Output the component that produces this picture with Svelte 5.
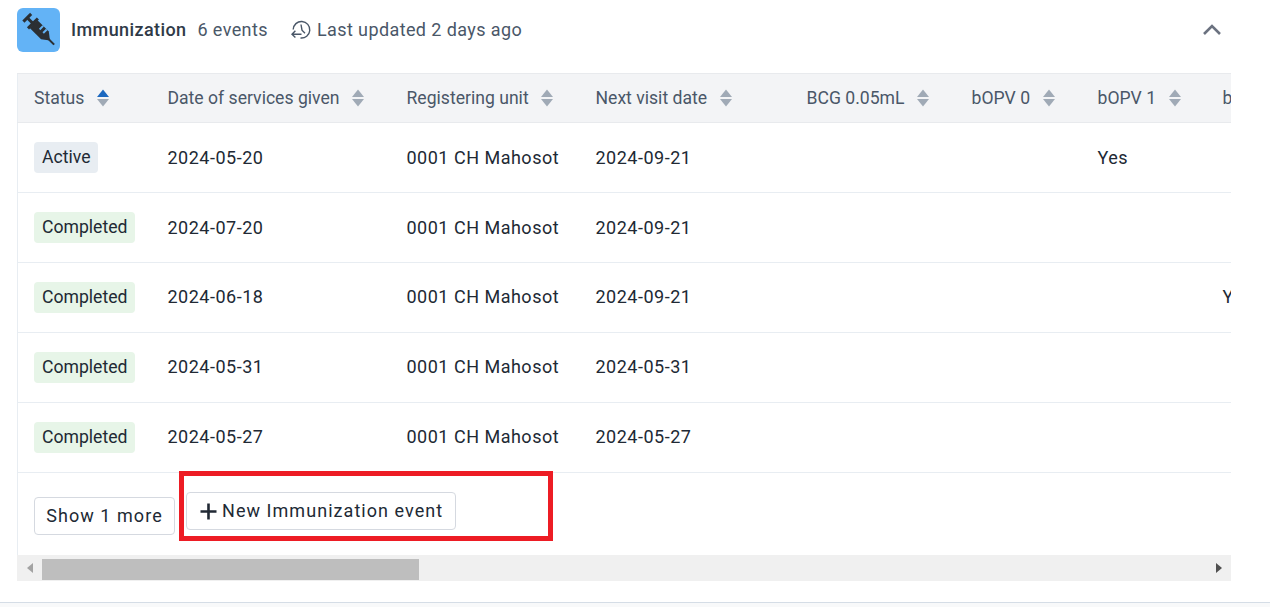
<script>
  const rows = [
    { status: 'Active', date: '2024-05-20', next: '2024-09-21', v1: 'Yes', v2: '' },
    { status: 'Completed', date: '2024-07-20', next: '2024-09-21', v1: '', v2: '' },
    { status: 'Completed', date: '2024-06-18', next: '2024-09-21', v1: '', v2: 'Yes' },
    { status: 'Completed', date: '2024-05-31', next: '2024-05-31', v1: '', v2: '' },
    { status: 'Completed', date: '2024-05-27', next: '2024-05-27', v1: '', v2: '' }
  ];
  const cols = [
    { label: 'Status', active: true },
    { label: 'Date of services given' },
    { label: 'Registering unit' },
    { label: 'Next visit date' },
    { label: 'BCG 0.05mL' },
    { label: 'bOPV 0' },
    { label: 'bOPV 1' },
    { label: 'bOPV 2' }
  ];
</script>

<div class="page">
  <section class="widget">
    <header class="head">
      <div class="logo">
        <svg width="43" height="44" viewBox="0 0 43 44">
          <g transform="translate(23 22.5) rotate(-45)" fill="#2b2f33">
            <rect x="-5.5" y="-19.5" width="11" height="3" />
            <rect x="-1.5" y="-17" width="3" height="9" />
            <rect x="-7" y="-11.5" width="14" height="3" />
            <path d="M-5.5 -9h11V7L0 14-5.5 7z" />
            <rect x="-1" y="12" width="2" height="8" />
          </g>
          <g transform="translate(23 22.5) rotate(-45)" fill="#63b3f6">
            <rect x="0.5" y="-2" width="5" height="2" />
            <rect x="0.5" y="3" width="5" height="2" />
          </g>
        </svg>
      </div>
      <span class="title">Immunization</span>
      <span class="muted count">6 events</span>
      <span class="muted updated">
        <svg width="20" height="20" viewBox="0 0 20 20" fill="none" stroke="#4a5768" stroke-width="1.4">
          <path d="M2.2 9.5A8.3 8.3 0 1 1 9.5 18" />
          <path d="M10 4.5 11 10.2 14 13.2" />
          <path d="M1 14.2H10.5M4.4 10.8 1 14.2 4.4 17.6" />
        </svg>
        Last updated 2 days ago
      </span>
      <svg class="chev" width="18" height="11" viewBox="0 0 18 11" fill="none" stroke="#6b7280" stroke-width="2.6">
        <path d="M1 10 9 2 17 10" />
      </svg>
    </header>

    <div class="panel">
      <div class="scroll">
        <table>
          <colgroup>
            <col class="c1" /><col class="c2" /><col class="c3" /><col class="c4" /><col class="c5" /><col class="c6" /><col class="c7" /><col class="c8" />
          </colgroup>
          <thead>
            <tr>
              {#each cols as col}
                <th>
                  <span class="th-in">
                    {col.label}
                    <svg class="sort" width="12" height="18" viewBox="0 0 12 18">
                      <path d="M6 0.5 12 8H0z" fill={col.active ? '#1b68c0' : '#a0aab6'} />
                      <path d="M6 17.5 12 10H0z" fill="#a0aab6" />
                    </svg>
                  </span>
                </th>
              {/each}
            </tr>
          </thead>
          <tbody>
            {#each rows as row}
              <tr>
                <td><span class="tag" class:done={row.status === 'Completed'}>{row.status}</span></td>
                <td>{row.date}</td>
                <td>0001 CH Mahosot</td>
                <td>{row.next}</td>
                <td></td>
                <td></td>
                <td>{row.v1}</td>
                <td>{row.v2}</td>
              </tr>
            {/each}
          </tbody>
        </table>
      </div>
      <div class="foot">
        <button class="btn more">Show 1 more</button>
        <button class="btn add">
          <svg width="17" height="17" viewBox="0 0 17 17" stroke="#212934" stroke-width="2.6"><path d="M8.5 0.5v16M0.5 8.5h16" /></svg>
          New Immunization event
        </button>
      </div>
      <div class="bar">
        <span class="arrow left"></span>
        <div class="track"><div class="thumb"></div></div>
        <span class="arrow right"></span>
      </div>
    </div>
  </section>
  <div class="highlight"></div>
  <div class="below"></div>
</div>

<style>
  :global(body) { margin: 0; background: #fff; }
  .page {
    position: relative;
    height: 607px;
    overflow: hidden;
    font-family: Roboto, "Liberation Sans", sans-serif;
    font-size: 18px;
    color: #212934;
    display: flex;
    flex-direction: column;
  }
  .widget { width: 1214px; margin-left: 17px; flex: 1; }
  .head { height: 73px; display: flex; align-items: flex-start; padding-top: 8px; box-sizing: border-box; letter-spacing: 0.4px; }
  .logo {
    width: 43px; height: 44px; background: #63b3f6; border-radius: 6px;
    display: flex; align-items: center; justify-content: center; flex: none;
  }
  .title { margin-left: 11px; line-height: 43px; font-weight: 500; color: #2f3a47; }
  .muted { color: #4a5768; line-height: 43px; }
  .count { margin-left: 11px; }
  .updated { margin-left: 23px; display: flex; align-items: center; gap: 6px; }
  .chev { margin-left: auto; margin-top: 16px; margin-right: 10px; }
  .scroll { overflow: hidden; }
  table { border-collapse: collapse; table-layout: fixed; width: 1320px; }
  .c1 { width: 134px; } .c2 { width: 239px; } .c3 { width: 189px; } .c4 { width: 211px; }
  .c5 { width: 165px; } .c6 { width: 126px; } .c7 { width: 125px; } .c8 { width: 131px; }
  th {
    height: 48px; padding: 0 0 0 16px; background: #f3f4f6; text-align: left;
    font-weight: 400; font-size: 17.6px; color: #4a5768; border-top: 1px solid #e8eaed; border-bottom: 1px solid #e8eaed;
    white-space: nowrap;
  }
  .th-in { display: flex; align-items: center; gap: 12.5px; }
  .sort { flex: none; }
  td {
    height: 69px; padding: 0 0 0 16px; border-bottom: 1px solid #e8edf2;
    white-space: nowrap; color: #212934; letter-spacing: 0.5px;
  }
  tr:nth-child(n+3) td:not(:first-child) { padding-bottom: 2px; height: 67px; }
  tr td:first-child, tr th:first-child { border-left: 1px solid #e8edf2; }
  .tag {
    display: inline-block; padding: 0 8px; line-height: 31px; border-radius: 4px;
    background: #e8edf2; color: #212934; font-size: 17.6px; letter-spacing: 0;
  }
  .tag.done { background: #e7f5e8; }
  .foot {
    height: 82px; box-sizing: border-box; padding-left: 16px; display: flex; gap: 11px; align-items: flex-start;
    border-left: 1px solid #e8edf2;
  }
  .btn {
    font: inherit; color: #212934; background: #fff; border: 1px solid #d5d9e0; border-radius: 4px;
    letter-spacing: 1.05px; box-sizing: border-box; padding: 0 0 2px;
  }
  .more { width: 141px; height: 38px; margin-top: 24px; }
  .add {
    width: 270px; height: 38px; margin-top: 19px;
    display: flex; align-items: center; gap: 5.5px; padding-left: 12.5px;
  }
  .add svg { margin-top: 3px; }
  .bar { height: 26px; background: #f0f0f0; display: flex; align-items: center; }
  .track { flex: 1; height: 21px; margin-top: 2px; }
  .thumb { width: 377px; height: 100%; background: #bebebe; }
  .arrow { width: 25px; flex: none; display: flex; justify-content: center; }
  .arrow::before { content: ""; border-style: solid; border-color: transparent; border-width: 5px 0 5px 6px; }
  .left::before { border-width: 5px 6px 5px 0; border-right-color: #a3a3a3; }
  .right::before { border-left-color: #505050; }
  .highlight {
    position: absolute; left: 179px; top: 471px; width: 374px; height: 70px;
    box-sizing: border-box; border: 5px solid #ed1c24;
  }
  .below { height: 4px; background: #f8f9fa; border-top: 1px solid #d5dde6; }
</style>
